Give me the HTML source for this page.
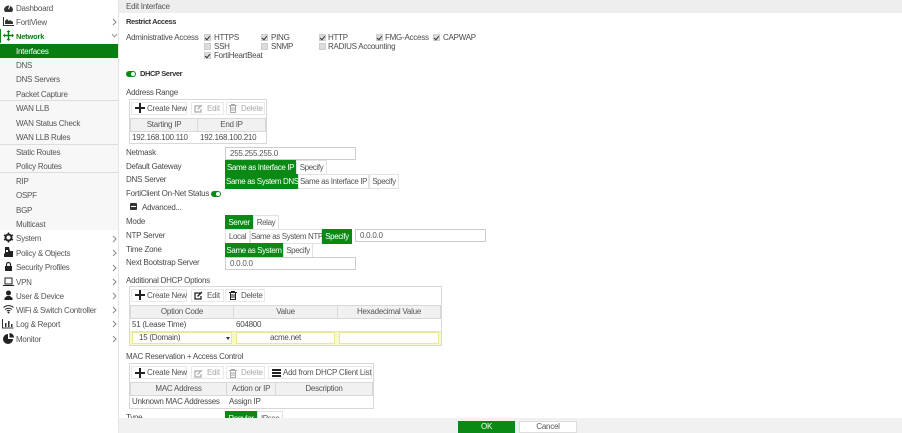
<!DOCTYPE html>
<html><head><meta charset="utf-8">
<style>
html,body{margin:0;padding:0;background:#fff}
#p{position:relative;width:902px;height:433px;overflow:hidden;background:#fff;font:8px/12px "Liberation Sans",sans-serif;letter-spacing:-.25px;color:#4a4a4a;filter:blur(.35px)}
#p div,#p span.a,#p svg{position:absolute}
.t{white-space:nowrap}
.h{font-weight:bold;font-size:7.5px;letter-spacing:-.4px;color:#333}
.n{left:16px;margin-top:1px;white-space:nowrap;color:#555;line-height:14px;height:14px}
.m{left:3px;width:11px;height:11px}
.c{left:112px;width:5px;height:8px}
.ln{left:0;width:118px;height:1px;background:#ddd}
.cb{width:7px;height:7px;background:#ddd;border:1px solid #ccc;box-sizing:border-box}
.ck:after{content:"";position:absolute;left:1px;top:0;width:2px;height:4px;border:solid #333;border-width:0 1.5px 1.5px 0;transform:rotate(40deg)}
.sg{height:15px;border:1px solid #e2e2e2;box-sizing:border-box;line-height:13px;text-align:center;color:#555;white-space:nowrap;background:#fff;letter-spacing:-.38px}
.on{background:#0a8a14;border-color:#0a8a14;color:#fff}
.in{height:13px;border:1px solid #ccc;box-sizing:border-box;line-height:11px;padding-left:4px;color:#555;background:#fff}
.b{height:13px;border:1px solid #e8e8e8;box-sizing:border-box;line-height:11px;white-space:nowrap;color:#555;background:#fff}
.dis{color:#aaa}
.th{background:#f1f1f1;border:1px solid #d8d8d8;box-sizing:border-box;text-align:center;line-height:11px;color:#555;white-space:nowrap}
.box{border:1px solid #d8d8d8;box-sizing:border-box;background:#fff}
.sw{width:10px;height:6px;background:#0a8a14;border-radius:3px}
.sw:after{content:"";position:absolute;right:1px;top:1px;width:4px;height:4px;border-radius:2px;background:#fff}
</style></head><body><div id="p">

<!-- Sidebar -->
<div style="left:0;top:0;width:118px;height:433px;background:#fff"></div>
<div style="left:0;top:43px;width:118px;height:187px;background:#f7f7f7"></div>
<div style="left:118px;top:0;width:1px;height:433px;background:#e4e4e4"></div>
<div style="left:0;top:29px;width:1px;height:14px;background:#0a8a14"></div>
<div class="ln" style="top:100px"></div>
<div class="ln" style="top:144px"></div>
<div class="ln" style="top:172px"></div>
<div style="left:0;top:44px;width:118px;height:14px;background:#0a7d10"></div>

<div class="n" style="top:1px">Dashboard</div>
<div class="n" style="top:15px">FortiView</div>
<div class="n" style="top:29px;color:#0a7d10;font-weight:bold;font-size:7.5px;letter-spacing:-.2px">Network</div>
<div class="n" style="top:44px;color:#fff">Interfaces</div>
<div class="n" style="top:58px">DNS</div>
<div class="n" style="top:72px">DNS Servers</div>
<div class="n" style="top:87px">Packet Capture</div>
<div class="n" style="top:101px">WAN LLB</div>
<div class="n" style="top:116px">WAN Status Check</div>
<div class="n" style="top:130px">WAN LLB Rules</div>
<div class="n" style="top:145px">Static Routes</div>
<div class="n" style="top:159px">Policy Routes</div>
<div class="n" style="top:174px">RIP</div>
<div class="n" style="top:188px">OSPF</div>
<div class="n" style="top:203px">BGP</div>
<div class="n" style="top:217px">Multicast</div>
<div class="n" style="top:231px">System</div>
<div class="n" style="top:246px">Policy &amp; Objects</div>
<div class="n" style="top:260px">Security Profiles</div>
<div class="n" style="top:275px">VPN</div>
<div class="n" style="top:289px">User &amp; Device</div>
<div class="n" style="top:303px">WiFi &amp; Switch Controller</div>
<div class="n" style="top:317px">Log &amp; Report</div>
<div class="n" style="top:332px">Monitor</div>

<!-- Sidebar icons -->
<svg class="m" style="top:2px" viewBox="0 0 11 11"><path d="M1 8a4.500 4.500 0 1 1 9 0l-1 2H2z" fill="#333"/><path d="M5.500 7L7 3.500" stroke="#fff" stroke-width="1"/></svg>
<svg class="m" style="top:16px" viewBox="0 0 11 11"><path d="M0 1h1v8h10v1H0z" fill="#333"/><path d="M2 8V5l2-2 2 2 1-1 3 2v2z" fill="#333"/></svg>
<svg class="m" style="top:30px" viewBox="0 0 11 11"><path d="M5 1h1v9H5zM1 5h9v1H1z" fill="#0a7d10" stroke="#0a7d10" stroke-width=".5"/><path d="M5.500 0l2 2h-4zM5.500 11l2-2h-4zM0 5.500l2-2v4zM11 5.500l-2-2v4z" fill="#0a7d10"/></svg>
<svg class="m" style="top:232px" viewBox="0 0 11 11"><circle cx="5.500" cy="5.500" r="3" fill="none" stroke="#222" stroke-width="2"/><path d="M5.500 0.500v2M5.500 8.500v2M1 3l2 1M8 7l2 1M1 8l2-1M8 4l2-1" stroke="#222" stroke-width="1.400"/></svg>
<svg class="m" style="top:247px" viewBox="0 0 11 11"><path d="M2 0h4l1 4h3v6H1V7l1-1z" fill="#222"/><path d="M3 3h2v2H3z" fill="#fff"/></svg>
<svg class="m" style="top:261px" viewBox="0 0 11 11"><path d="M3.500 5V3.500a2 2 0 0 1 4 0V5" fill="none" stroke="#222" stroke-width="1.200"/><rect x="2" y="5" width="7" height="5" fill="#222"/></svg>
<svg class="m" style="top:276px" viewBox="0 0 11 11"><rect x="2" y="2" width="7" height="6" fill="none" stroke="#222"/><path d="M0 9.500h11" stroke="#222" stroke-width="1"/></svg>
<svg class="m" style="top:290px" viewBox="0 0 11 11"><circle cx="5.500" cy="3" r="2.500" fill="#222"/><path d="M1.500 10V8l2.500-2h3l2.500 2v2z" fill="#222"/></svg>
<svg class="m" style="top:304px" viewBox="0 0 11 11"><path d="M.5 3.500c3-2.500 7-2.500 10 0M2 5.500c2-1.700 5-1.700 7 0M3.700 7c1-.7 2.600-.7 3.600 0" fill="none" stroke="#222" stroke-width="1"/><circle cx="5.500" cy="8.500" r="1" fill="#222"/></svg>
<svg class="m" style="top:318px;left:2px;width:12px" viewBox="0 0 12 11"><path d="M.5 1v9h11" fill="none" stroke="#333"/><path d="M3 5h1.500v4H3zM6 3h1.500v6H6zM9 6h1.500v3H9z" fill="#333"/></svg>
<svg class="m" style="top:333px" viewBox="0 0 11 11"><path d="M5 1v5h5a5 5 0 1 1-5-5z" fill="#222"/><path d="M6.500 0a4.500 4.500 0 0 1 4.500 4.500H6.500z" fill="#222"/></svg>

<!-- chevrons -->
<svg class="c" style="top:18px" viewBox="0 0 5 8"><path d="M1 1l3 3-3 3" fill="none" stroke="#888"/></svg>
<svg class="c" style="top:33px;width:7px;height:5px;left:111px" viewBox="0 0 7 5"><path d="M1 1l2.500 3L6 1" fill="none" stroke="#999"/></svg>
<svg class="c" style="top:235px" viewBox="0 0 5 8"><path d="M1 1l3 3-3 3" fill="none" stroke="#888"/></svg>
<svg class="c" style="top:249px" viewBox="0 0 5 8"><path d="M1 1l3 3-3 3" fill="none" stroke="#888"/></svg>
<svg class="c" style="top:264px" viewBox="0 0 5 8"><path d="M1 1l3 3-3 3" fill="none" stroke="#888"/></svg>
<svg class="c" style="top:278px" viewBox="0 0 5 8"><path d="M1 1l3 3-3 3" fill="none" stroke="#888"/></svg>
<svg class="c" style="top:292px" viewBox="0 0 5 8"><path d="M1 1l3 3-3 3" fill="none" stroke="#888"/></svg>
<svg class="c" style="top:306px" viewBox="0 0 5 8"><path d="M1 1l3 3-3 3" fill="none" stroke="#888"/></svg>
<svg class="c" style="top:320px" viewBox="0 0 5 8"><path d="M1 1l3 3-3 3" fill="none" stroke="#888"/></svg>
<svg class="c" style="top:335px" viewBox="0 0 5 8"><path d="M1 1l3 3-3 3" fill="none" stroke="#888"/></svg>

<!-- Header -->
<div style="left:119px;top:0;width:783px;height:13px;background:#eee"></div>
<div class="t" style="left:126px;top:1px;color:#555">Edit Interface</div>
<div class="t h" style="left:126px;top:16px">Restrict Access</div>

<div class="t" style="left:126px;top:32px">Administrative Access</div>
<div class="cb ck" style="left:204px;top:34px"></div><div class="t" style="left:214px;top:32px">HTTPS</div>
<div class="cb ck" style="left:261px;top:34px"></div><div class="t" style="left:271px;top:32px">PING</div>
<div class="cb ck" style="left:319px;top:34px"></div><div class="t" style="left:328px;top:32px">HTTP</div>
<div class="cb ck" style="left:376px;top:34px"></div><div class="t" style="left:385px;top:32px">FMG-Access</div>
<div class="cb ck" style="left:433px;top:34px"></div><div class="t" style="left:443px;top:32px">CAPWAP</div>
<div class="cb" style="left:204px;top:43px"></div><div class="t" style="left:214px;top:41px">SSH</div>
<div class="cb" style="left:261px;top:43px"></div><div class="t" style="left:271px;top:41px">SNMP</div>
<div class="cb" style="left:319px;top:43px"></div><div class="t" style="left:328px;top:41px">RADIUS Accounting</div>
<div class="cb ck" style="left:204px;top:52px"></div><div class="t" style="left:214px;top:50px">FortiHeartBeat</div>

<div class="sw" style="left:126px;top:71px"></div>
<div class="t h" style="left:140px;top:68px">DHCP Server</div>
<div class="t" style="left:126px;top:87px">Address Range</div>

<!-- Address range table -->
<div class="box" style="left:129px;top:99px;width:138px;height:45px"></div>
<div class="b" style="left:131px;top:102px;width:56px;padding-left:15px">Create New</div>
<svg style="left:135px;top:103px;width:10px;height:10px" viewBox="0 0 10 10"><path d="M4 0h2v4h4v2H6v4H4V6H0V4h4z" fill="#222"/></svg>
<div class="b dis" style="left:191px;top:102px;width:33px;padding-left:15px">Edit</div>
<svg style="left:194px;top:104px;width:9px;height:9px" viewBox="0 0 9 9"><path d="M7 2H1v6h6V5M3.500 5.500L8 1" fill="none" stroke="#aaa" stroke-width="1.200"/></svg>
<div class="b dis" style="left:226px;top:102px;width:39px;padding-left:14px">Delete</div>
<svg style="left:229px;top:104px;width:8px;height:9px" viewBox="0 0 8 9"><path d="M0 1.500h8M2.500 1.500V.5h3v1M1.500 2v6.500h5V2M3 3v4M5 3v4" fill="none" stroke="#aaa"/></svg>
<div class="th" style="left:130px;top:118px;width:68px;height:14px">Starting IP</div>
<div class="th" style="left:197px;top:118px;width:69px;height:14px">End IP</div>
<div class="t" style="left:132px;top:132px">192.168.100.110</div>
<div class="t" style="left:200px;top:132px">192.168.100.210</div>

<!-- Form -->
<div class="t" style="left:126px;top:147px">Netmask</div>
<div class="in" style="left:225px;top:147px;width:131px">255.255.255.0</div>

<div class="t" style="left:126px;top:161px">Default Gateway</div>
<div class="sg on" style="left:225px;top:160px;width:71px">Same as Interface IP</div>
<div class="sg" style="left:296px;top:160px;width:31px">Specify</div>

<div class="t" style="left:126px;top:174px">DNS Server</div>
<div class="sg on" style="left:225px;top:174px;width:73px">Same as System DNS</div>
<div class="sg" style="left:298px;top:174px;width:71px">Same as Interface IP</div>
<div class="sg" style="left:369px;top:174px;width:30px">Specify</div>

<div class="t" style="left:126px;top:188px">FortiClient On-Net Status</div>
<div class="sw" style="left:211px;top:191px"></div>

<div style="left:130px;top:203px;width:7px;height:7px;background:#333;border-radius:1px"></div>
<div style="left:131px;top:206px;width:5px;height:1px;background:#fff"></div>
<div class="t" style="left:142px;top:202px">Advanced...</div>

<div class="t" style="left:126px;top:216px">Mode</div>
<div class="sg on" style="left:225px;top:215px;width:28px">Server</div>
<div class="sg" style="left:253px;top:215px;width:26px">Relay</div>

<div class="t" style="left:126px;top:230px">NTP Server</div>
<div class="sg" style="left:225px;top:229px;width:25px">Local</div>
<div class="sg" style="left:250px;top:229px;width:72px">Same as System NTP</div>
<div class="sg on" style="left:322px;top:229px;width:30px">Specify</div>
<div class="in" style="left:355px;top:229px;width:131px">0.0.0.0</div>

<div class="t" style="left:126px;top:244px">Time Zone</div>
<div class="sg on" style="left:225px;top:243px;width:58px">Same as System</div>
<div class="sg" style="left:283px;top:243px;width:30px">Specify</div>

<div class="t" style="left:126px;top:257px">Next Bootstrap Server</div>
<div class="in" style="left:225px;top:257px;width:131px">0.0.0.0</div>

<div class="t" style="left:126px;top:275px">Additional DHCP Options</div>

<!-- DHCP options -->
<div class="box" style="left:129px;top:286px;width:313px;height:60px"></div>
<div class="b" style="left:131px;top:289px;width:56px;padding-left:15px">Create New</div>
<svg style="left:135px;top:290px;width:10px;height:10px" viewBox="0 0 10 10"><path d="M4 0h2v4h4v2H6v4H4V6H0V4h4z" fill="#222"/></svg>
<div class="b" style="left:191px;top:289px;width:33px;padding-left:15px">Edit</div>
<svg style="left:194px;top:291px;width:9px;height:9px" viewBox="0 0 9 9"><path d="M7 2H1v6h6V5M3.500 5.500L8 1" fill="none" stroke="#222" stroke-width="1.300"/></svg>
<div class="b" style="left:225px;top:289px;width:40px;padding-left:15px">Delete</div>
<svg style="left:229px;top:291px;width:8px;height:9px" viewBox="0 0 8 9"><path d="M0 1.500h8M2.500 1.500V.5h3v1M1.500 2v6.500h5V2M3 3v4M5 3v4" fill="none" stroke="#222"/></svg>
<div class="th" style="left:130px;top:305px;width:104px;height:14px">Option Code</div>
<div class="th" style="left:233px;top:305px;width:105px;height:14px">Value</div>
<div class="th" style="left:337px;top:305px;width:104px;height:14px">Hexadecimal Value</div>
<div class="t" style="left:132px;top:319px">51 (Lease Time)</div>
<div class="t" style="left:236px;top:319px">604800</div>
<div style="left:130px;top:331px;width:311px;height:14px;background:#f9f9c8;border-top:1px solid #e8e8a8;box-sizing:border-box"></div>
<div class="t" style="left:132px;top:332px;width:100px;height:12px;background:#fff;border:1px solid #e8e890;box-sizing:border-box;padding-left:6px;line-height:10px">15 (Domain)</div>
<div style="left:226px;top:337px;width:0;height:0;border:2px solid transparent;border-top:3px solid #333"></div>
<div class="t" style="left:236px;top:332px;width:99px;height:12px;background:#fff;border:1px solid #e8e890;box-sizing:border-box;text-align:center;line-height:10px">acme.net</div>
<div style="left:339px;top:332px;width:100px;height:12px;background:#fff;border:1px solid #e8e890;box-sizing:border-box"></div>

<div class="t" style="left:126px;top:351px">MAC Reservation + Access Control</div>

<!-- MAC table -->
<div class="box" style="left:129px;top:363px;width:245px;height:46px"></div>
<div class="b" style="left:131px;top:366px;width:56px;padding-left:15px">Create New</div>
<svg style="left:135px;top:368px;width:10px;height:10px" viewBox="0 0 10 10"><path d="M4 0h2v4h4v2H6v4H4V6H0V4h4z" fill="#222"/></svg>
<div class="b dis" style="left:191px;top:366px;width:33px;padding-left:15px">Edit</div>
<svg style="left:194px;top:369px;width:9px;height:9px" viewBox="0 0 9 9"><path d="M7 2H1v6h6V5M3.500 5.500L8 1" fill="none" stroke="#aaa" stroke-width="1.200"/></svg>
<div class="b dis" style="left:226px;top:366px;width:39px;padding-left:14px">Delete</div>
<svg style="left:229px;top:369px;width:8px;height:9px" viewBox="0 0 8 9"><path d="M0 1.500h8M2.500 1.500V.5h3v1M1.500 2v6.500h5V2M3 3v4M5 3v4" fill="none" stroke="#aaa"/></svg>
<div class="b" style="left:268px;top:366px;width:104px;padding-left:14px">Add from DHCP Client List</div>
<svg style="left:272px;top:369px;width:9px;height:8px" viewBox="0 0 9 8"><path d="M0 0h9v2H0zM0 3h9v2H0zM0 6h9v2H0z" fill="#222"/></svg>
<div class="th" style="left:130px;top:382px;width:97px;height:14px">MAC Address</div>
<div class="th" style="left:226px;top:382px;width:50px;height:14px">Action or IP</div>
<div class="th" style="left:275px;top:382px;width:98px;height:14px">Description</div>
<div class="t" style="left:132px;top:396px">Unknown MAC Addresses</div>
<div class="t" style="left:229px;top:396px">Assign IP</div>

<div class="t" style="left:126px;top:412px">Type</div>
<div class="sg on" style="left:225px;top:411px;width:32px">Regular</div>
<div class="sg" style="left:257px;top:411px;width:26px">IPsec</div>

<!-- Footer -->
<div style="left:119px;top:418px;width:783px;height:15px;background:#f1f1f1"></div>
<div style="left:458px;top:421px;width:57px;height:12px;background:#0a8a14;color:#fff;text-align:center;line-height:12px">OK</div>
<div style="left:519px;top:421px;width:58px;height:12px;background:#fff;border:1px solid #ddd;box-sizing:border-box;text-align:center;line-height:10px;color:#555">Cancel</div>

</div></body></html>
